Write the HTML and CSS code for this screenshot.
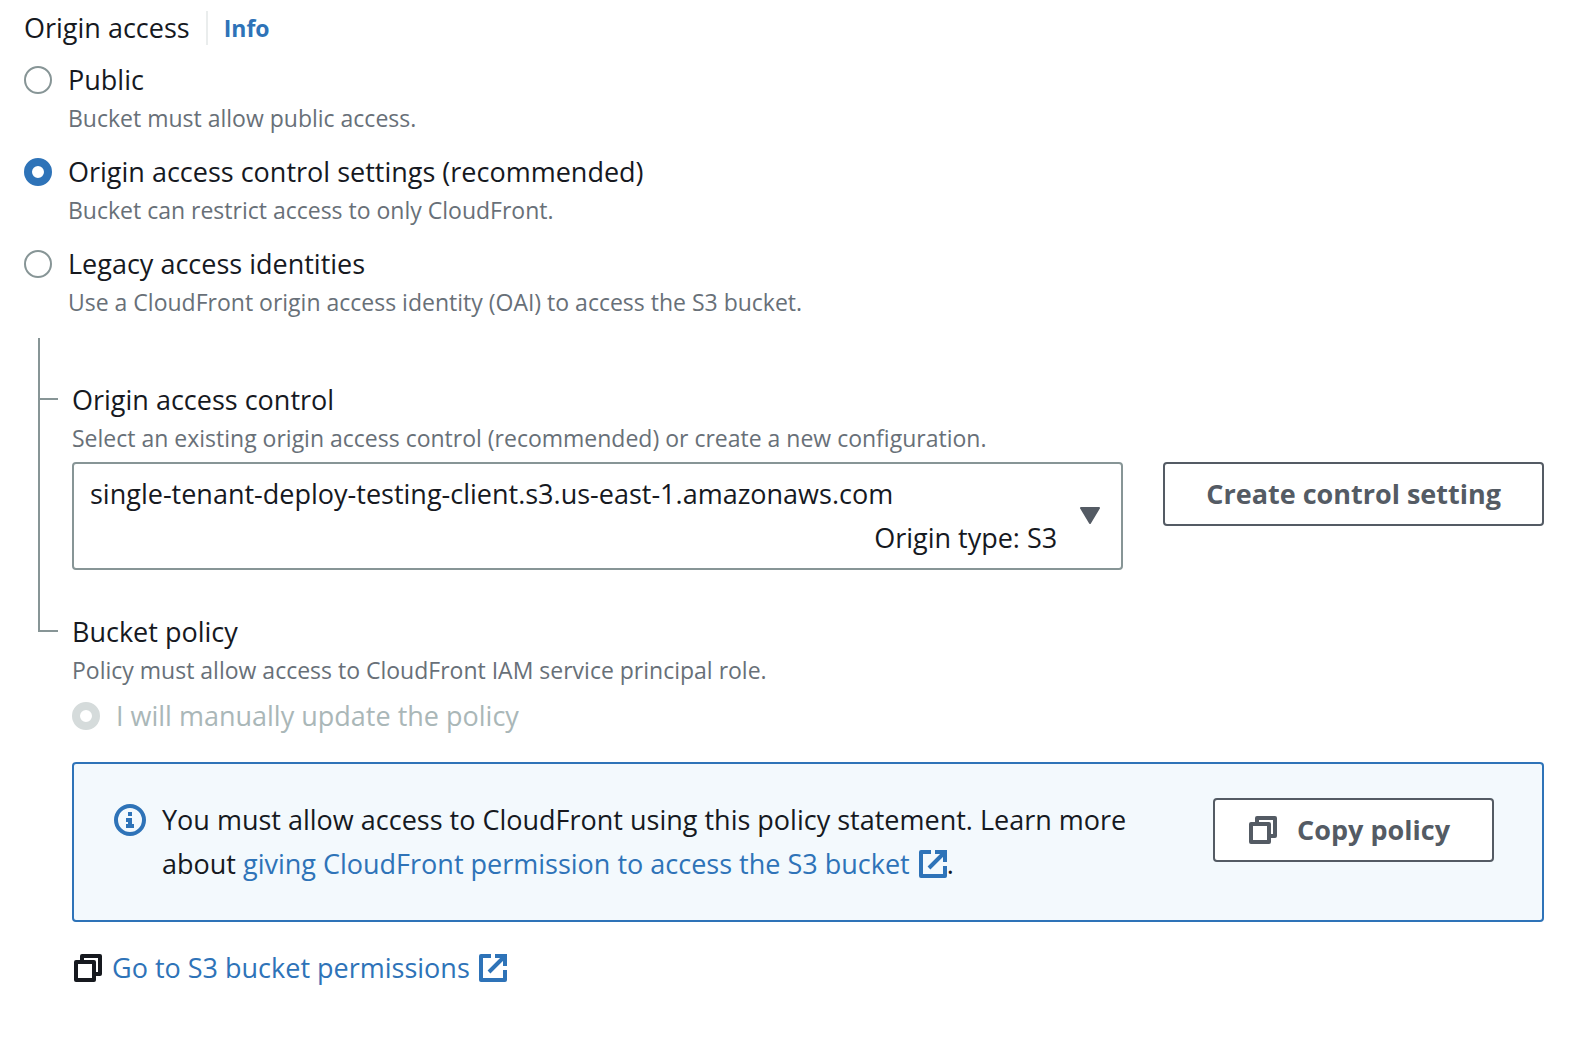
FILE: index.html
```html
<!DOCTYPE html>
<html lang="en">
<head>
<meta charset="utf-8">
<meta name="viewport" content="width=device-width, initial-scale=1">
<title>Origin access</title>
<link rel="stylesheet" href="styles.css">
</head>
<body>
<svg class="sprite" aria-hidden="true">
  <symbol id="icon-copy" viewBox="0 0 28 28">
    <g fill="none" stroke="currentColor" stroke-width="4" stroke-linejoin="round">
      <path d="M2 8h18v18H2z"/>
      <path d="M8 7V2h18v18h-5"/>
    </g>
  </symbol>
  <symbol id="icon-external" viewBox="0 0 28 28">
    <g fill="none" stroke="currentColor" stroke-width="4">
      <path d="M12 2H2v24h24V16" stroke-linejoin="round"/>
      <path d="M16 2h10v10M10 18L25 3"/>
    </g>
  </symbol>
  <symbol id="icon-info" viewBox="0 0 32 32">
    <circle cx="16" cy="16" r="14" fill="none" stroke="currentColor" stroke-width="4"/>
    <path fill="currentColor" d="M14 8h4v4h-4zM12 14h6v6h2v4h-8v-4h2v-2h-2z"/>
  </symbol>
</svg>

<main class="panel">
  <fieldset class="origin-access">
    <legend class="legend">
      <span class="label">Origin access</span>
      <a class="info-link" href="#info">Info</a>
    </legend>
    <div class="choices">
      <div class="choice">
        <input class="radio" type="radio" name="access" id="access-public">
        <div class="choice-text">
          <label class="label" for="access-public">Public</label>
          <p class="hint">Bucket must allow public access.</p>
        </div>
      </div>
      <div class="choice">
        <input class="radio" type="radio" name="access" id="access-oac" checked>
        <div class="choice-text">
          <label class="label" for="access-oac">Origin access control settings (recommended)</label>
          <p class="hint">Bucket can restrict access to only CloudFront.</p>
        </div>
      </div>
      <div class="choice">
        <input class="radio" type="radio" name="access" id="access-oai">
        <div class="choice-text">
          <label class="label" for="access-oai">Legacy access identities</label>
          <p class="hint">Use a CloudFront origin access identity (OAI) to access the S3 bucket.</p>
        </div>
      </div>
    </div>
  </fieldset>

  <div class="tree">
    <section class="node node-first">
      <div class="connector"><div class="branch"></div></div>
      <div class="node-body">
        <label class="label" for="oac-select">Origin access control</label>
        <p class="hint">Select an existing origin access control (recommended) or create a new configuration.</p>
        <div class="field-row">
          <div class="select-box">
            <select class="select" id="oac-select">
              <option>single-tenant-deploy-testing-client.s3.us-east-1.amazonaws.com</option>
            </select>
            <span class="select-meta">Origin type: S3</span>
            <svg class="caret" viewBox="0 0 22 18" aria-hidden="true"><path d="M2 1h18l-9 15z" fill="currentColor" stroke="currentColor" stroke-width="2" stroke-linejoin="round"/></svg>
          </div>
          <button class="button" type="button">Create control setting</button>
        </div>
      </div>
    </section>

    <section class="node node-last">
      <div class="connector"><div class="branch"></div></div>
      <div class="node-body">
        <h2 class="label">Bucket policy</h2>
        <p class="hint">Policy must allow access to CloudFront IAM service principal role.</p>
        <div class="choice policy-choice">
          <input class="radio" type="radio" name="policy" id="policy-manual" checked disabled>
          <label class="label" for="policy-manual">I will manually update the policy</label>
        </div>
        <div class="alert" role="status">
          <svg class="icon-info" aria-hidden="true"><use href="#icon-info"/></svg>
          <p class="alert-text">You must allow access to CloudFront using this policy statement. Learn more about <a class="link" href="#permission">giving CloudFront permission to access the S3 bucket <svg class="icon icon-inline" aria-hidden="true"><use href="#icon-external"/></svg></a>.</p>
          <button class="button button-icon" type="button"><svg class="icon" aria-hidden="true"><use href="#icon-copy"/></svg>Copy policy</button>
        </div>
        <div class="permissions">
          <svg class="icon" aria-hidden="true"><use href="#icon-copy"/></svg>
          <a class="link" href="#bucket">Go to S3 bucket permissions <svg class="icon icon-inline" aria-hidden="true"><use href="#icon-external"/></svg></a>
        </div>
      </div>
    </section>
  </div>
</main>
</body>
</html>
```
FILE: styles.css
```css
:root {
  --text: #16191f;
  --muted: #687078;
  --blue: #2e73b8;
  --line: #879596;
  --button: #545b64;
}

* {
  box-sizing: border-box;
}

body {
  margin: 0;
  background: #fff;
  color: var(--text);
  font: 27px/44px "Open Sans", "Noto Sans", sans-serif;
}

h2,
p {
  margin: 0;
}

.sprite {
  display: none;
}

.panel {
  padding: 6px 36px 54px 24px;
}

.origin-access {
  min-width: 0;
  margin: 0;
  padding: 0;
  border: 0;
}

.legend {
  display: flex;
  align-items: center;
  gap: 16px;
  padding: 0;
}

.label {
  display: block;
  font-size: 27px;
  font-weight: 400;
  line-height: 44px;
}

.hint {
  color: var(--muted);
  font-size: 23px;
  line-height: 32px;
}

.info-link {
  padding-left: 16px;
  border-left: 2px solid #eaeded;
  color: var(--blue);
  font-size: 23px;
  font-weight: 700;
  line-height: 34px;
  text-decoration: none;
}

.choices {
  display: grid;
  gap: 16px;
  padding-top: 8px;
}

.choice {
  display: flex;
  gap: 16px;
}

.radio {
  appearance: none;
  flex: none;
  width: 28px;
  height: 28px;
  margin: 8px 0;
  border: 2px solid var(--line);
  border-radius: 50%;
  background: #fff;
}

.radio:checked {
  border: 8px solid var(--blue);
}

.radio:disabled {
  border-color: #d5dbdb;
}

.radio:disabled + .label {
  color: #aab7b8;
}

/* Sub-settings, joined to the choice above by a bracket line */
.tree {
  margin: 20px 0 0 14px;
}

.node {
  display: grid;
  grid-template-columns: 20px minmax(0, 1fr);
  gap: 14px;
}

.connector {
  border-left: 2px solid var(--line);
}

.branch {
  height: 22px;
  border-bottom: 2px solid var(--line);
}

.node-first .branch {
  height: 62px;
}

.node-first .node-body {
  padding: 40px 0;
}

.node-last .connector {
  align-self: start;
}

.field-row {
  display: flex;
  align-items: flex-start;
  gap: 40px;
  margin-top: 8px;
}

.select-box {
  display: grid;
  flex: 1;
  min-width: 0;
}

.select,
.select-meta,
.caret {
  grid-area: 1 / 1;
}

.select {
  appearance: none;
  width: 100%;
  height: 108px;
  padding: 8px 64px 52px 16px;
  border: 2px solid var(--line);
  border-radius: 4px;
  background: #fff;
  color: var(--text);
  font: inherit;
}

.select-meta {
  place-self: end;
  margin: 0 66px 10px 0;
  pointer-events: none;
}

.caret {
  place-self: center end;
  width: 22px;
  height: 18px;
  margin-right: 22px;
  color: var(--button);
  pointer-events: none;
}

.button {
  flex: none;
  height: 64px;
  padding: 0 41px;
  border: 2px solid var(--button);
  border-radius: 4px;
  background: #fff;
  color: var(--button);
  font: inherit;
  font-weight: 700;
}

.button-icon {
  display: flex;
  align-items: center;
  gap: 20px;
  padding: 0 42px 0 34px;
}

.policy-choice {
  margin-top: 8px;
}

.alert {
  display: flex;
  align-items: flex-start;
  gap: 16px;
  margin-top: 24px;
  padding: 34px 48px 34px 40px;
  border: 2px solid var(--blue);
  border-radius: 4px;
  background: #f3f9fd;
}

.alert-text {
  flex: 1;
}

.link {
  color: var(--blue);
  text-decoration: none;
}

.icon {
  flex: none;
  width: 28px;
  height: 28px;
}

.icon-inline {
  margin-left: 2px;
  vertical-align: -4px;
}

.icon-info {
  flex: none;
  width: 32px;
  height: 32px;
  margin-top: 6px;
  color: var(--blue);
}

.permissions {
  display: flex;
  align-items: center;
  gap: 10px;
  margin-top: 24px;
  padding-left: 2px;
}
```
